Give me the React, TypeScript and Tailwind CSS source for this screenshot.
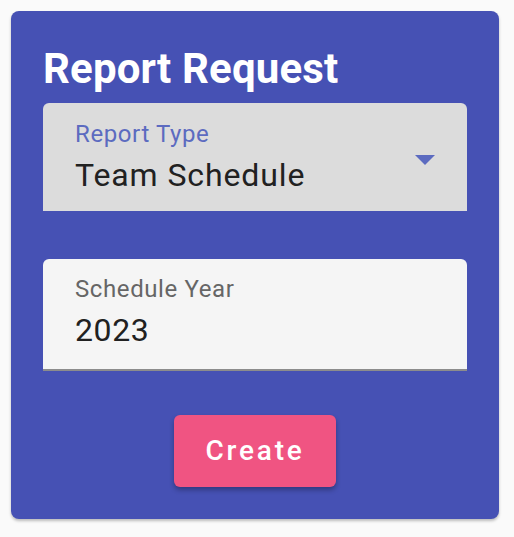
export default function App() {
  return (
    <div className="min-h-[537px] bg-[#fafafa] p-[11px] pr-[15px] font-['Roboto',sans-serif]">
      <div className="flex w-[488px] flex-col rounded-lg bg-[#4651b4] px-8 pb-8 pt-8 shadow-[0_2px_3px_rgba(0,0,0,0.25)]">
        <h1 className="text-[42px] font-bold leading-[52px] tracking-[0.15px] text-white">Report Request</h1>

        {/* select */}
        <div className="mt-2 flex h-[108px] items-start rounded-t-[6px] bg-[#dcdcdc] px-8">
          <div className="flex flex-1 flex-col pt-[19px]">
            <span className="text-[24px] leading-6 tracking-[0.6px] text-[#5c6bc0]">Report Type</span>
            <span className="mt-[9px] text-[32px] leading-[40px] tracking-[0.9px] text-[#212121]">Team Schedule</span>
          </div>
          <svg className="mt-[52px] h-[10px] w-5" viewBox="0 0 20 10">
            <path d="M0 0h20L10 10z" fill="#5c6bc0" />
          </svg>
        </div>

        {/* text field */}
        <div className="mt-12 flex h-[112px] flex-col rounded-t-[6px] border-b-2 border-[#8c8c8c] bg-[#f5f5f5] px-8 pt-[18px]">
          <span className="text-[24px] leading-6 tracking-[0.6px] text-[#666666]">Schedule Year</span>
          <span className="mt-[9px] text-[32px] leading-[40px] tracking-[0.6px] text-[#212121]">2023</span>
        </div>

        <div className="mt-[44px] flex justify-center">
          <button className="h-[72px] w-[162px] rounded-[6px] bg-[#f05482] text-[28px] font-medium tracking-[2.8px] text-white shadow-[0_3px_5px_rgba(0,0,0,0.3)]">
            Create
          </button>
        </div>
      </div>
    </div>
  );
}
